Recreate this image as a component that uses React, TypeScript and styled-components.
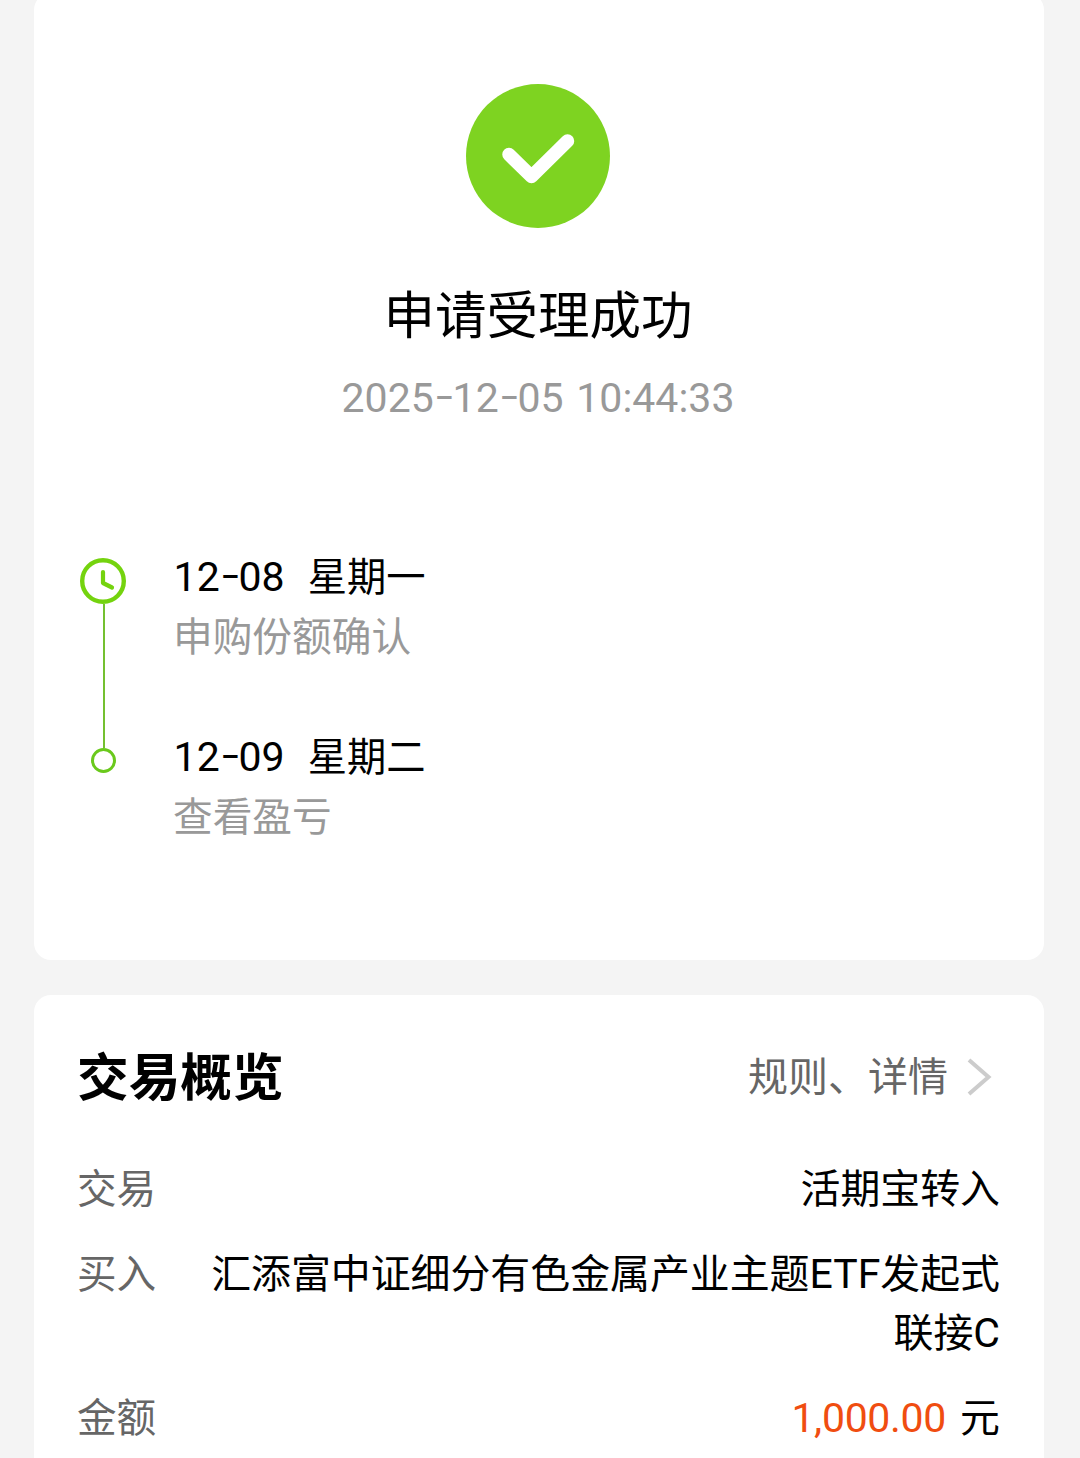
import React from "react";
import styled, { createGlobalStyle } from "styled-components";

const GlobalStyle = createGlobalStyle`
  * { box-sizing: border-box; }
  body {
    margin: 0;
    background: #f4f4f4;
    font-family: Roboto, "Noto Sans CJK SC", sans-serif;
    color: #000;
    overflow: hidden;
  }
`;

const Page = styled.main`
  width: 1080px;
  height: 1458px;
  padding: 0 36px 0 34px;
  display: flex;
  flex-direction: column;
  gap: 35px;
  overflow: hidden;
`;

const Card = styled.section`
  flex: none;
  background: #fff;
  border-radius: 17px;
`;

const ResultCard = styled(Card)`
  height: 967px;
  margin-top: -7px;
  padding-top: 91px;
`;

const OverviewCard = styled(Card)`
  height: 520px;
  padding: 49px 44px 0 43px;
`;

const Result = styled.header`
  display: flex;
  flex-direction: column;
  align-items: center;
  padding-right: 2px;
  svg { display: block; }
`;

const ResultTitle = styled.h1`
  margin: 54px 0 0;
  font-size: 51.5px;
  line-height: 70px;
  font-weight: 400;
`;

const ResultTime = styled.time`
  margin-top: 16px;
  font-size: 41px;
  line-height: 60px;
  word-spacing: 2.5px;
  color: #999;
  white-space: pre;
`;

const Dash = styled.span`
  font-family: Inter, sans-serif;
  font-size: 47px;
  line-height: 0;
  font-weight: 300;
  letter-spacing: -2.4px;
`;

const Timeline = styled.ol`
  list-style: none;
  margin: 119px 0 0;
  padding: 0 0 0 46px;
`;

const Step = styled.li`
  display: flex;
  height: 180px;
`;

const Rail = styled.div<{ $first?: boolean }>`
  width: 47px;
  padding-top: ${(p) => (p.$first ? "11px" : "0")};
  display: flex;
  flex-direction: column;
  align-items: center;
  svg { display: block; flex: none; }
`;

const Line = styled.i<{ $length?: number }>`
  width: 2px;
  margin-left: 1px;
  ${(p) => (p.$length ? `height: ${p.$length}px;` : "flex: 1;")}
  background: #74c030;
`;

const StepText = styled.div`
  padding-left: 46px;
`;

const StepDate = styled.div`
  display: flex;
  gap: 23px;
  height: 61px;
  padding-left: 0.6px;
  font-size: 41px;
  line-height: 61px;
`;

const Weekday = styled.span`
  padding-top: 1px;
  font-size: 39.3px;
  line-height: 60px;
`;

const StepNote = styled.div`
  font-size: 39.7px;
  line-height: 60px;
  color: #999;
`;

const OverviewHead = styled.div`
  display: flex;
  justify-content: space-between;
  height: 70px;
  margin-bottom: 46px;
`;

const OverviewTitle = styled.h2`
  margin: 0;
  font-size: 51.7px;
  line-height: 70px;
  font-weight: 700;
`;

const RulesLink = styled.a`
  display: flex;
  align-items: center;
  height: 68px;
  gap: 19px;
  padding-right: 8px;
  font-size: 40px;
  line-height: 68px;
  color: #666;
  svg { margin-bottom: 2px; }
`;

const Row = styled.div`
  display: flex;
  justify-content: space-between;
  margin-bottom: 26px;
  line-height: 59px;
  font-size: 39.9px;
`;

const Label = styled.span`
  flex: none;
  font-size: 39.6px;
  color: #666;
`;

const Value = styled.span`
  display: flex;
  flex-direction: column;
  align-items: flex-end;
`;

const ValueLine = styled.span`
  display: block;
  height: 59px;
  white-space: nowrap;
`;

const Latin = styled.span`
  font-size: 41px;
`;

const Amount = styled(Latin)`
  color: #f04d10;
  letter-spacing: -0.3px;
  margin-right: 14px;
`;

const SuccessIcon = () => (
  <svg width="144" height="144" viewBox="0 0 144 144">
    <circle cx="72" cy="72" r="72" fill="#7ed321" />
    <path d="M43 70.5L65.5 92.5L101.5 57" fill="none" stroke="#fff" strokeWidth="13.5" strokeLinecap="round" strokeLinejoin="round" />
  </svg>
);

const ClockIcon = () => (
  <svg width="47" height="46" viewBox="0 0 47 46" fill="none" stroke="#74d30e">
    <circle cx="23" cy="23" r="20.8" strokeWidth="4.4" />
    <path d="M23 14V25L32 29.5" strokeWidth="4.2" strokeLinecap="round" strokeLinejoin="round" />
  </svg>
);

const DotIcon = () => (
  <svg width="25" height="25" viewBox="0 0 25 25">
    <circle cx="12.5" cy="12.5" r="11" fill="#fff" stroke="#6ac91c" strokeWidth="3" />
  </svg>
);

const ChevronIcon = () => (
  <svg width="25" height="38" viewBox="0 0 25 38">
    <path d="M2 2L21.5 19L2 36" fill="none" stroke="#ccc" strokeWidth="4" />
  </svg>
);

const DateText = ({ value }: { value: string }) => (
  <span>
    {value.split("-").map((part, i) => (
      <React.Fragment key={i}>
        {i > 0 && <Dash>-</Dash>}
        {part}
      </React.Fragment>
    ))}
  </span>
);

export default function App() {
  return (
    <>
      <GlobalStyle />
      <Page>
        <ResultCard>
          <Result>
            <SuccessIcon />
            <ResultTitle>申请受理成功</ResultTitle>
            <ResultTime><DateText value="2025-12-05 10:44:33" /></ResultTime>
          </Result>
          <Timeline>
            <Step>
              <Rail $first>
                <ClockIcon />
                <Line />
              </Rail>
              <StepText>
                <StepDate><DateText value="12-08" /><Weekday>星期一</Weekday></StepDate>
                <StepNote>申购份额确认</StepNote>
              </StepText>
            </Step>
            <Step>
              <Rail>
                <Line $length={21} />
                <DotIcon />
              </Rail>
              <StepText>
                <StepDate><DateText value="12-09" /><Weekday>星期二</Weekday></StepDate>
                <StepNote>查看盈亏</StepNote>
              </StepText>
            </Step>
          </Timeline>
        </ResultCard>
        <OverviewCard>
          <OverviewHead>
            <OverviewTitle>交易概览</OverviewTitle>
            <RulesLink>规则、详情<ChevronIcon /></RulesLink>
          </OverviewHead>
          <Row>
            <Label>交易</Label>
            <Value><ValueLine>活期宝转入</ValueLine></Value>
          </Row>
          <Row>
            <Label>买入</Label>
            <Value>
              <ValueLine>汇添富中证细分有色金属产业主题<Latin>ETF</Latin>发起式</ValueLine>
              <ValueLine>联接<Latin>C</Latin></ValueLine>
            </Value>
          </Row>
          <Row>
            <Label>金额</Label>
            <Value><ValueLine><Amount>1,000.00</Amount>元</ValueLine></Value>
          </Row>
        </OverviewCard>
      </Page>
    </>
  );
}
